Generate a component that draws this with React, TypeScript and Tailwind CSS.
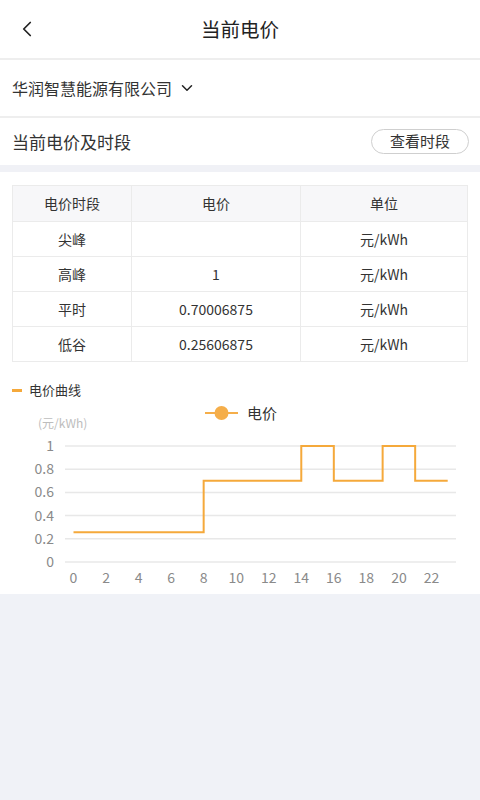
import { ChevronDown, ChevronLeft } from 'lucide-react'

const font = { fontFamily: '"Noto Sans CJK SC", "Noto Sans", sans-serif' }

const rows = [
  { name: '尖峰', price: '', unit: '元/kWh' },
  { name: '高峰', price: '1', unit: '元/kWh' },
  { name: '平时', price: '0.70006875', unit: '元/kWh' },
  { name: '低谷', price: '0.25606875', unit: '元/kWh' },
]

// hour -> price steps
const steps: [number, number][] = [
  [0, 0.256],
  [8, 0.7],
  [14, 1],
  [16, 0.7],
  [19, 1],
  [21, 0.7],
  [23, 0.7],
]

const hx = (h: number) => 73.5 + h * 16.27
const vy = (v: number) => 561 - 116 * v

function PriceChart() {
  let d = ''
  steps.forEach(([h, v], i) => {
    if (i === 0) d += `M${hx(h)} ${vy(v)}`
    else {
      d += ` H${hx(h)}`
      if (i < steps.length - 1) d += ` V${vy(v)}`
    }
  })

  const yTicks = [0, 0.2, 0.4, 0.6, 0.8, 1]
  const xTicks = [0, 2, 4, 6, 8, 10, 12, 14, 16, 18, 20, 22]

  return (
    <svg width="480" height="195" viewBox="0 398 480 195" className="block">
      <line x1="205" y1="412" x2="238" y2="412" stroke="#f5ae4a" strokeWidth="2" />
      <circle cx="221.5" cy="412" r="7" fill="#f5ae4a" />
      <text x="247" y="418" fontSize="15" fill="#333" style={font}>
        电价
      </text>
      <text x="38" y="427" fontSize="12" fill="#bdbdbd" style={font}>
        (元/kWh)
      </text>
      {yTicks.map((t) => (
        <g key={t}>
          <line x1="65" x2="456" y1={vy(t)} y2={vy(t)} stroke="#e8e8e8" strokeWidth="1.5" />
          <text x="54" y={vy(t) + 5} fontSize="14" fill="#8a8a8a" textAnchor="end" style={font}>
            {t === 0 ? '0' : t === 1 ? '1' : t.toFixed(1)}
          </text>
        </g>
      ))}
      {xTicks.map((t) => (
        <text key={t} x={hx(t)} y="582" fontSize="14" fill="#8a8a8a" textAnchor="middle" style={font}>
          {t}
        </text>
      ))}
      <path d={d} fill="none" stroke="#f5a93b" strokeWidth="2" />
    </svg>
  )
}

export default function App() {
  return (
    <div className="w-[480px] min-h-[800px] bg-[#f0f2f7] text-[#333]" style={font}>
      <div className="bg-white">
        <div className="relative h-[60px] flex items-center justify-center border-b-2 border-[#eeeeee]">
          <ChevronLeft className="absolute left-[14px] top-[16px] w-[26px] h-[26px] text-[#222]" strokeWidth={1.6} />
          <h1 className="text-[19.5px] text-[#222]">当前电价</h1>
        </div>
        <div className="h-[58px] flex items-center px-3 border-b-2 border-[#eeeeee]">
          <span className="text-[16px] text-[#333]">华润智慧能源有限公司</span>
          <ChevronDown className="ml-[6px] w-[18px] h-[18px] text-[#222]" strokeWidth={2} />
        </div>
        <div className="h-[47px] flex items-center justify-between px-3">
          <span className="text-[17px] text-[#333]">当前电价及时段</span>
          <button className="h-[25px] w-[98px] mr-[-1px] rounded-full border border-[#cfcfcf] text-[15px] text-[#333] flex items-center justify-center">
            查看时段
          </button>
        </div>
      </div>
      <div className="h-[7px] bg-[#f0f1f6]" />
      <div className="bg-white pt-[13px]">
        <div className="px-3">
          <table className="w-full border-collapse text-[14px] text-[#333] table-fixed">
            <colgroup>
              <col className="w-[119px]" />
              <col className="w-[169px]" />
              <col />
            </colgroup>
            <thead>
              <tr className="h-[36px] bg-[#f7f7f9]">
                <th className="font-normal border border-[#ebebeb]">电价时段</th>
                <th className="font-normal border border-[#ebebeb]">电价</th>
                <th className="font-normal border border-[#ebebeb]">单位</th>
              </tr>
            </thead>
            <tbody>
              {rows.map((r) => (
                <tr key={r.name} className="h-[35px]">
                  <td className="text-center border border-[#ebebeb]">{r.name}</td>
                  <td className="text-center border border-[#ebebeb]">{r.price}</td>
                  <td className="text-center border border-[#ebebeb]">{r.unit}</td>
                </tr>
              ))}
            </tbody>
          </table>
        </div>
        <div className="flex items-center px-3 mt-[19px] h-[18px]">
          <span className="w-[10px] h-[3px] bg-[#f5a93b] mr-[7px]" />
          <span className="text-[13px] text-[#333]">电价曲线</span>
        </div>
        <PriceChart />
      </div>
    </div>
  )
}
